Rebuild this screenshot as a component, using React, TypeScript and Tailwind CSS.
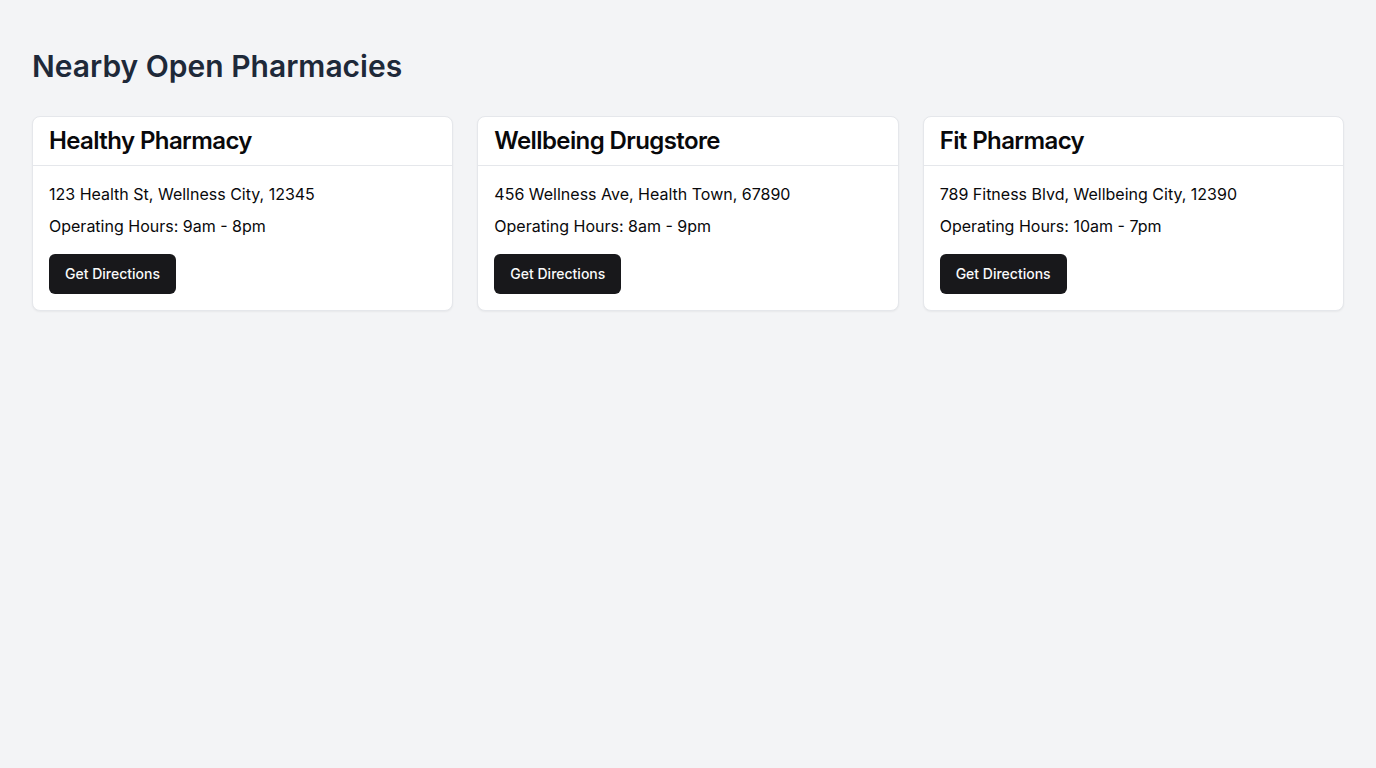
import React from "react";

const pharmacies = [
  { name: "Healthy Pharmacy", address: "123 Health St, Wellness City, 12345", hours: "9am - 8pm" },
  { name: "Wellbeing Drugstore", address: "456 Wellness Ave, Health Town, 67890", hours: "8am - 9pm" },
  { name: "Fit Pharmacy", address: "789 Fitness Blvd, Wellbeing City, 12390", hours: "10am - 7pm" },
];

export default function App() {
  return (
    <div className="min-h-screen bg-gray-100 px-8 pt-12 font-['Inter',sans-serif]">
      <h1 className="mb-8 text-3xl font-semibold text-gray-800">Nearby Open Pharmacies</h1>
      <div className="grid grid-cols-3 gap-6">
        {pharmacies.map((p) => (
          <div
            key={p.name}
            className="rounded-lg border border-gray-200 bg-white text-[#09090b] shadow-[0_1px_2px_0_rgb(0_0_0/0.05)]"
          >
            <div className="border-b border-gray-200 px-4 py-2">
              <h2 className="text-2xl font-semibold tracking-tight">{p.name}</h2>
            </div>
            <div className="px-4 pt-4 pb-4">
              <p className="mb-2 text-base">{p.address}</p>
              <p className="mb-4 text-base">Operating Hours: {p.hours}</p>
              <button className="h-10 rounded-md bg-[#18181b] px-4 text-sm font-medium text-[#fafafa]">
                Get Directions
              </button>
            </div>
          </div>
        ))}
      </div>
    </div>
  );
}
